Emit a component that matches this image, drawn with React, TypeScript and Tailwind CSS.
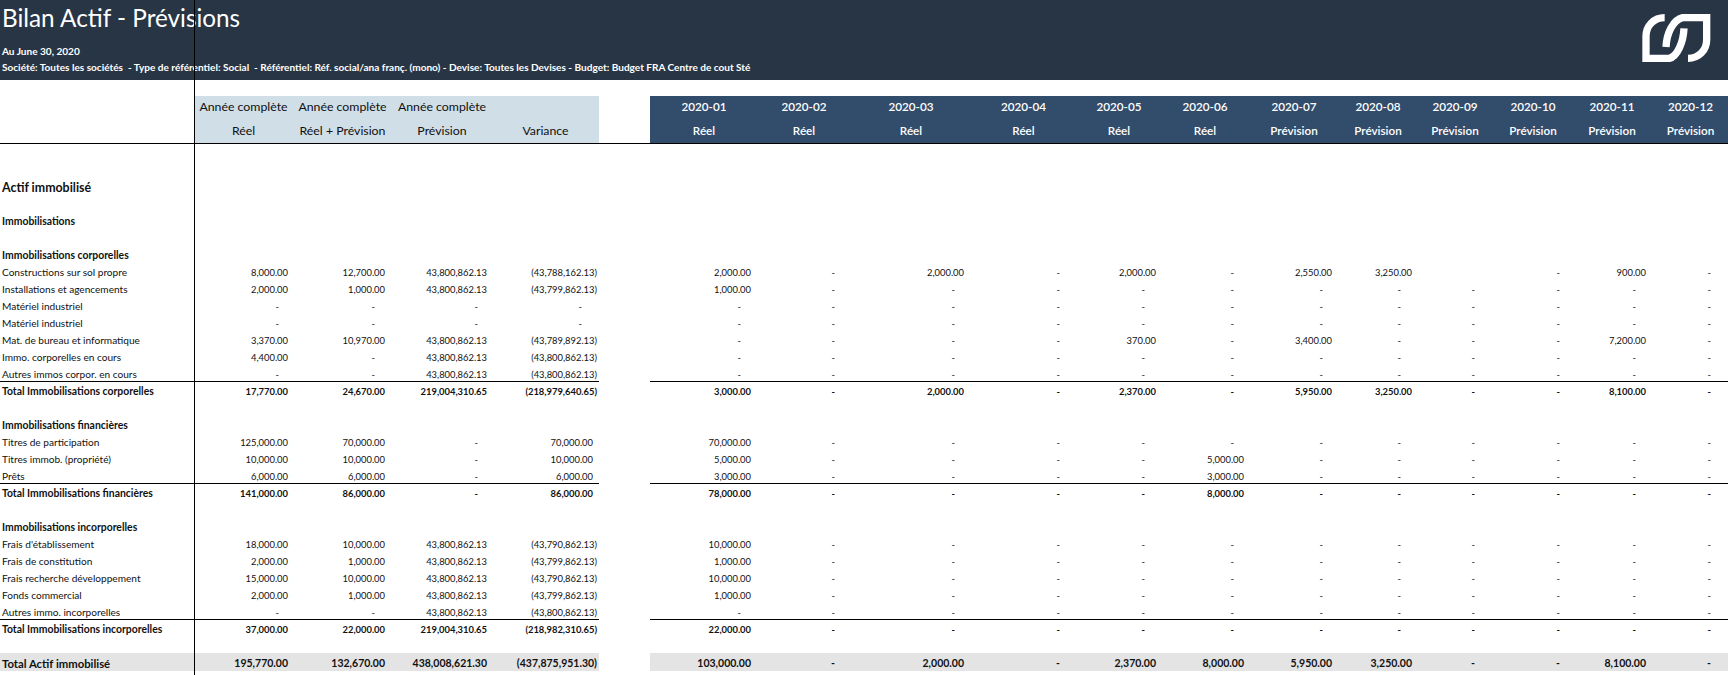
const leftCols = [
  { w: "w-[99px]", val: "pr-[5px]", dash: "pr-[14px]" },
  { w: "w-[99px]", val: "pr-[7px]", dash: "pr-[17px]" },
  { w: "w-[100px]", val: "pr-[5px]", dash: "pr-[14px]" },
  { w: "w-[107px]", val: "pr-[6px]", dash: "pr-[17px]" },
];

const monthCols = [
  { w: "w-[108px]", val: "pr-[7px]", dash: "pr-[17px]" },
  { w: "w-[92px]", val: "pr-[7px]", dash: "pr-[15px]" },
  { w: "w-[122px]", val: "pr-[8px]", dash: "pr-[17px]" },
  { w: "w-[103px]", val: "pr-[7px]", dash: "pr-[15px]" },
  { w: "w-[88px]", val: "pr-[7px]", dash: "pr-[18px]" },
  { w: "w-[84px]", val: "pr-[3px]", dash: "pr-[13px]" },
  { w: "w-[94px]", val: "pr-[9px]", dash: "pr-[18px]" },
  { w: "w-[74px]", val: "pr-[3px]", dash: "pr-[14px]" },
  { w: "w-[80px]", val: "pr-[7px]", dash: "pr-[20px]" },
  { w: "w-[76px]", val: "pr-[7px]", dash: "pr-[11px]" },
  { w: "w-[82px]", val: "pr-[7px]", dash: "pr-[17px]" },
  { w: "w-[75px]", val: "pr-[7px]", dash: "pr-[17px]" },
];

const months = [
  ["2020-01", "Réel"],
  ["2020-02", "Réel"],
  ["2020-03", "Réel"],
  ["2020-04", "Réel"],
  ["2020-05", "Réel"],
  ["2020-06", "Réel"],
  ["2020-07", "Prévision"],
  ["2020-08", "Prévision"],
  ["2020-09", "Prévision"],
  ["2020-10", "Prévision"],
  ["2020-11", "Prévision"],
  ["2020-12", "Prévision"],
];

type RowData = {
  kind: "blank" | "title" | "section" | "item" | "total" | "grand";
  label?: string;
  left?: string[];
  right?: string[];
};

// fills the remaining months with a dash
const m = (...vals: string[]) => [...vals, ...Array(12 - vals.length).fill("-")];
const F = "43,800,862.13";

const rows: RowData[] = [
  { kind: "blank" },
  { kind: "blank" },
  { kind: "title", label: "Actif immobilisé" },
  { kind: "blank" },
  { kind: "section", label: "Immobilisations" },
  { kind: "blank" },
  { kind: "section", label: "Immobilisations corporelles" },
  { kind: "item", label: "Constructions sur sol propre", left: ["8,000.00", "12,700.00", F, "(43,788,162.13)"], right: m("2,000.00", "-", "2,000.00", "-", "2,000.00", "-", "2,550.00", "3,250.00", "", "-", "900.00", "-") },
  { kind: "item", label: "Installations et agencements", left: ["2,000.00", "1,000.00", F, "(43,799,862.13)"], right: m("1,000.00") },
  { kind: "item", label: "Matériel industriel", left: ["-", "-", "-", "-"], right: m() },
  { kind: "item", label: "Matériel industriel", left: ["-", "-", "-", "-"], right: m() },
  { kind: "item", label: "Mat. de bureau et informatique", left: ["3,370.00", "10,970.00", F, "(43,789,892.13)"], right: m("-", "-", "-", "-", "370.00", "-", "3,400.00", "-", "-", "-", "7,200.00", "-") },
  { kind: "item", label: "Immo. corporelles en cours", left: ["4,400.00", "-", F, "(43,800,862.13)"], right: m() },
  { kind: "item", label: "Autres immos corpor. en cours", left: ["-", "-", F, "(43,800,862.13)"], right: m() },
  { kind: "total", label: "Total Immobilisations corporelles", left: ["17,770.00", "24,670.00", "219,004,310.65", "(218,979,640.65)"], right: m("3,000.00", "-", "2,000.00", "-", "2,370.00", "-", "5,950.00", "3,250.00", "-", "-", "8,100.00", "-") },
  { kind: "blank" },
  { kind: "section", label: "Immobilisations financières" },
  { kind: "item", label: "Titres de participation", left: ["125,000.00", "70,000.00", "-", "70,000.00"], right: m("70,000.00") },
  { kind: "item", label: "Titres immob. (propriété)", left: ["10,000.00", "10,000.00", "-", "10,000.00"], right: m("5,000.00", "-", "-", "-", "-", "5,000.00") },
  { kind: "item", label: "Prêts", left: ["6,000.00", "6,000.00", "-", "6,000.00"], right: m("3,000.00", "-", "-", "-", "-", "3,000.00") },
  { kind: "total", label: "Total Immobilisations financières", left: ["141,000.00", "86,000.00", "-", "86,000.00"], right: m("78,000.00", "-", "-", "-", "-", "8,000.00") },
  { kind: "blank" },
  { kind: "section", label: "Immobilisations incorporelles" },
  { kind: "item", label: "Frais d'établissement", left: ["18,000.00", "10,000.00", F, "(43,790,862.13)"], right: m("10,000.00") },
  { kind: "item", label: "Frais de constitution", left: ["2,000.00", "1,000.00", F, "(43,799,862.13)"], right: m("1,000.00") },
  { kind: "item", label: "Frais recherche développement", left: ["15,000.00", "10,000.00", F, "(43,790,862.13)"], right: m("10,000.00") },
  { kind: "item", label: "Fonds commercial", left: ["2,000.00", "1,000.00", F, "(43,799,862.13)"], right: m("1,000.00") },
  { kind: "item", label: "Autres immo. incorporelles", left: ["-", "-", F, "(43,800,862.13)"], right: m() },
  { kind: "total", label: "Total Immobilisations incorporelles", left: ["37,000.00", "22,000.00", "219,004,310.65", "(218,982,310.65)"], right: m("22,000.00") },
  { kind: "blank" },
  { kind: "grand", label: "Total Actif immobilisé", left: ["195,770.00", "132,670.00", "438,008,621.30", "(437,875,951.30)"], right: m("103,000.00", "-", "2,000.00", "-", "2,370.00", "8,000.00", "5,950.00", "3,250.00", "-", "-", "8,100.00", "-") },
];

function cellPad(col: { val: string; dash: string }, value: string) {
  if (value === "-") return col.dash;
  if (value.startsWith("(")) return "pr-[2px]";
  return col.val;
}

function Row({ row }: { row: RowData }) {
  if (row.kind === "blank") return <div className="h-[17px]" />;

  if (row.kind === "title") {
    return <div className="h-[17px] pl-[2px] pt-[1px] text-[12.4px] leading-[17px] font-bold">{row.label}</div>;
  }

  const isTotal = row.kind === "total";
  const isGrand = row.kind === "grand";
  const groupClass = isTotal
    ? "box-border h-[18px] mt-[-1px] flex border-t border-black pt-[2px]"
    : isGrand
      ? "h-[18px] flex bg-[#e4e4e4] pt-[3px] text-[10.5px]"
      : "h-[17px] flex pt-[2px]";
  const weight = row.kind === "item" ? "font-normal" : "font-bold";
  const labelSize = isGrand ? "text-[11.3px]" : row.kind === "item" ? "text-[10.1px]" : "text-[10.4px]";

  return (
    <div className={`flex leading-[15px] ${weight} ${isGrand ? "mt-[-1px]" : ""}`}>
      <div className={`w-[599px] ${groupClass}`}>
        <div className={`w-[194px] pl-[2px] whitespace-nowrap ${labelSize}`}>{row.label}</div>
        {row.left?.map((v, i) => (
          <div key={i} className={`${leftCols[i].w} ${cellPad(leftCols[i], v)} text-right`}>
            {v}
          </div>
        ))}
      </div>
      <div className={`ml-[51px] w-[1078px] ${groupClass}`}>
        {row.right?.map((v, i) => (
          <div key={i} className={`${monthCols[i].w} ${cellPad(monthCols[i], v)} text-right`}>
            {v}
          </div>
        ))}
      </div>
    </div>
  );
}

function Logo() {
  return (
    <svg viewBox="0 0 270 195" className="w-[90px] h-[65px]" fill="none" stroke="#ffffff" strokeWidth="22">
      <path d="M104 38 C 72 38 48 62 48 94 L 48 160 L 118 160 C 142 154 160 112 162 70" />
      <path d="M174 160 C 206 160 230 136 230 104 L 230 38 L 158 38 C 130 44 110 84 108 126" />
    </svg>
  );
}

export default function App() {
  return (
    <div className="relative w-[1728px] h-[675px] overflow-hidden bg-white text-[#111111] text-[9.4px] font-['Lato',sans-serif]">
      {/* frozen pane line */}
      <div className="absolute left-[194px] top-0 bottom-0 w-px bg-black" />

      <header className="h-[80px] bg-[#283545] text-white flex items-start justify-between pl-[2px] pr-[8px]">
        <div>
          <h1 className="text-[24.3px] leading-[36px]">Bilan Actif - Prévisions</h1>
          <p className="mt-[7px] text-[10.05px] leading-[16px] font-bold">Au June 30, 2020</p>
          <p className="text-[10.05px] leading-[17px] font-bold whitespace-pre">
            Société: Toutes les sociétés  - Type de référentiel: Social  - Référentiel: Réf. social/ana franç. (mono) - Devise: Toutes les Devises - Budget: Budget FRA Centre de cout Sté
          </p>
        </div>
        <div className="mt-[5px]">
          <Logo />
        </div>
      </header>

      <div className="mt-[16px] flex h-[48px] border-b border-black leading-[23px]">
        <div className="ml-[194px] w-[405px] h-[47px] flex bg-[#d0dee7] text-[12.3px]">
          {[
            ["Année complète", "Réel"],
            ["Année complète", "Réel + Prévision"],
            ["Année complète", "Prévision"],
            ["", "Variance"],
          ].map(([a, b], i) => (
            <div key={i} className={`${leftCols[i].w} text-center`}>
              <div className="h-[23px] leading-[21px]">{a}</div>
              <div>{b}</div>
            </div>
          ))}
        </div>
        <div className="ml-[51px] w-[1078px] h-[47px] flex bg-[#324c6b] text-white text-[11.7px] font-semibold">
          {months.map(([a, b], i) => (
            <div key={a} className={`${monthCols[i].w} text-center`}>
              <div className="h-[23px] leading-[21px]">{a}</div>
              <div>{b}</div>
            </div>
          ))}
        </div>
      </div>

      <div>
        {rows.map((row, i) => (
          <Row key={i} row={row} />
        ))}
      </div>
    </div>
  );
}
